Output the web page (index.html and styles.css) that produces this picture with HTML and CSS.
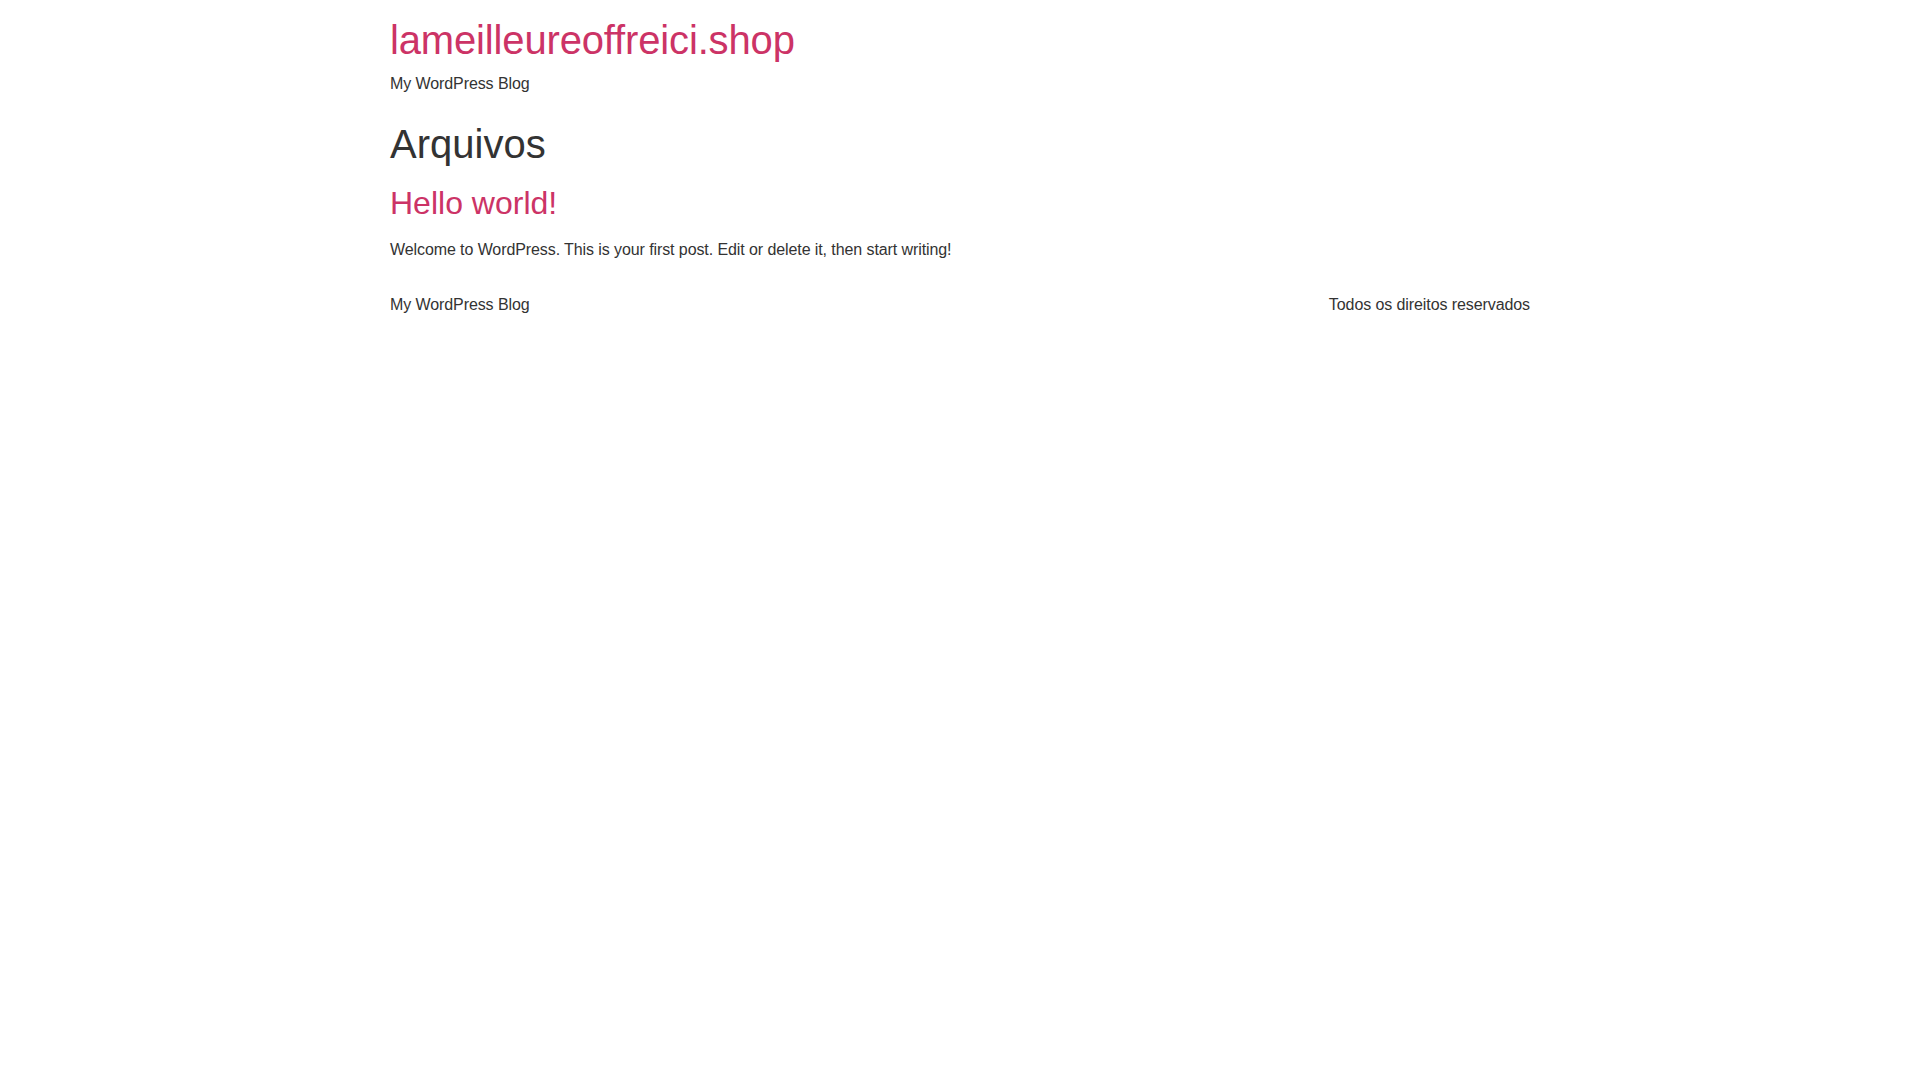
FILE: index.html
```html
<!DOCTYPE html>
<html lang="pt-BR">
<head>
<meta charset="utf-8">
<title>Arquivos - lameilleureoffreici.shop</title>
<link rel="stylesheet" href="styles.css">
</head>
<body>
<header class="site-header">
  <div class="site-branding">
    <h1 class="site-title"><a href="#">lameilleureoffreici.shop</a></h1>
    <p class="site-description">My WordPress Blog</p>
  </div>
</header>
<main class="site-main">
  <header class="page-header">
    <h1 class="entry-title">Arquivos</h1>
  </header>
  <div class="page-content">
    <article class="post">
      <h2 class="entry-title"><a href="#">Hello world!</a></h2>
      <p>Welcome to WordPress. This is your first post. Edit or delete it, then start writing!</p>
    </article>
  </div>
</main>
<footer class="site-footer">
  <div class="footer-inner">
    <p class="site-description">My WordPress Blog</p>
    <p class="copyright">Todos os direitos reservados</p>
  </div>
</footer>
</body>
</html>
```
FILE: styles.css
```css
html, body {
  margin: 0;
  padding: 0;
  background: #fff;
}
body {
  font-family: "Liberation Sans", Arial, sans-serif;
  font-size: 16px;
  line-height: 1.5;
  color: #333;
}
a {
  color: #c36;
  text-decoration: none;
}
h1, h2 {
  font-weight: 500;
  line-height: 1.2;
  margin: 8px 0 16px;
}
h1 { font-size: 40px; }
h2 { font-size: 32px; }
p {
  margin: 0 0 14.4px;
  letter-spacing: -0.09px;
}
.site-header, .site-main, .site-footer {
  max-width: 1140px;
  margin: 0 auto;
}
.site-header {
  padding-top: 16px;
}
.site-title {
  margin: 0 0 8px;
  letter-spacing: -0.15px;
}
.site-main {
  padding-top: 1.5px;
}
.page-header .entry-title {
  margin-top: 8px;
}
.site-footer {
  padding-top: 16.6px;
}
.footer-inner {
  display: flex;
  justify-content: space-between;
}
```
